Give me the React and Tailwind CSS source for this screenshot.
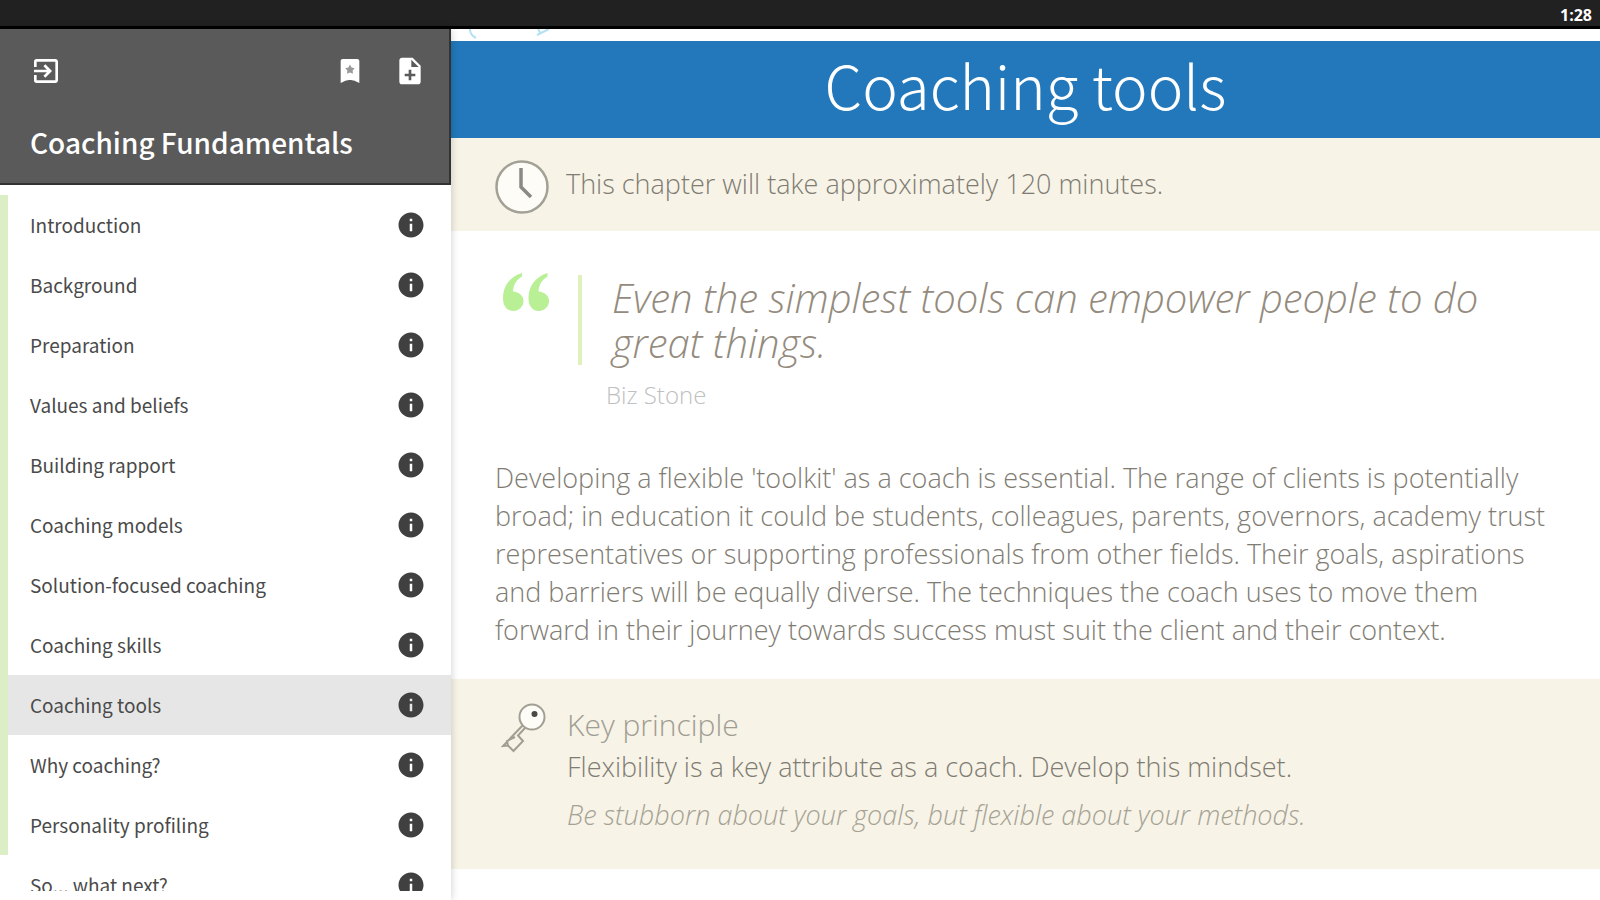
import { MdExitToApp, MdInfo, MdNoteAdd } from 'react-icons/md';

const chapters = [
  'Introduction',
  'Background',
  'Preparation',
  'Values and beliefs',
  'Building rapport',
  'Coaching models',
  'Solution-focused coaching',
  'Coaching skills',
  'Coaching tools',
  'Why coaching?',
  'Personality profiling',
  'So... what next?',
];

const current = 'Coaching tools';

const BookmarkIcon = () => (
  <svg viewBox="0 0 24 24" className="h-8 w-8" aria-hidden="true">
    <path d="M6.500 3h11C18.300 3 19 3.700 19 4.500V21l-4-1.800c-1.500-.7-4.500-.7-6 0L5 21V4.500C5 3.700 5.700 3 6.500 3z" fill="#fff" />
    <path d="M12 7.200l1.200 2.100 2.300.6-1.500 1.800.2 2.400-2.200-.9-2.200.9.2-2.400-1.500-1.800 2.300-.6z" fill="#999" />
  </svg>
);

const ClockIcon = () => (
  <svg viewBox="0 0 54 54" className="h-[54px] w-[54px] shrink-0" fill="none" aria-hidden="true">
    <circle cx="27" cy="27" r="25.500" fill="#fdfcf6" stroke="#a3a196" strokeWidth="2.500" />
    <path d="M26 8v19l10 10" stroke="#8b8a82" strokeWidth="3.500" />
  </svg>
);

const QuoteIcon = () => (
  <svg viewBox="0 0 46 38" className="h-[38px] w-[46px] shrink-0" fill="#b9ef95" aria-hidden="true">
    <path d="M19 0v3.500C14 6.500 10.500 11 10 18.500c6 .5 10.500 4 10.500 9.500 0 5.500-4.500 10-10.300 10C3.500 38 0 32.500 0 25 0 12.500 7.500 3.500 19 0z" />
    <path d="M44.500 0v3.500c-5 3-8.500 7.500-9 15 6 .5 10.500 4 10.500 9.500 0 5.500-4.500 10-10.300 10-6.700 0-10.200-5.500-10.200-13 0-12.500 7.500-21.500 19-25z" />
  </svg>
);

const KeyIcon = () => (
  <svg viewBox="0 0 46 50" className="h-[50px] w-[46px]" fill="none" stroke="#a19f93" strokeWidth="2" aria-hidden="true">
    <circle cx="31" cy="14" r="12.500" fill="#fdfcf6" />
    <path d="M21.500 22.500L2 43l5-.5 5.500 5.500L22 38l-5-5.500 7-7.500M7 42.500L6 38l8-4" />
    <circle cx="33.500" cy="11" r="3" fill="#4a4a44" stroke="none" />
  </svg>
);

export default function App() {
  return (
    <div className="flex h-screen flex-col overflow-hidden bg-white font-['Noto_Sans_CJK_JP',sans-serif]">
      <div className="flex h-[29px] shrink-0 items-center justify-end border-b-3 border-black bg-[#212121] px-2 pt-1 font-['Open_Sans',sans-serif] text-base font-bold text-white">
        1:28
      </div>

      <div className="flex min-h-0 flex-1">
        <aside className="z-10 flex w-[451px] shrink-0 flex-col bg-white pb-[9px] shadow-[0_0_8px_rgba(0,0,0,0.2)]">
          <header className="h-[156px] shrink-0 border-r-2 border-b-2 border-[#333] bg-[#5a5a5a] pt-[26px] pr-[23px] pl-[30px] text-white">
            <div className="flex items-center">
              <button type="button" aria-label="Close book">
                <MdExitToApp className="h-8 w-8" />
              </button>
              <button type="button" aria-label="Bookmarks" className="ml-auto">
                <BookmarkIcon />
              </button>
              <button type="button" aria-label="Add note" className="ml-7">
                <MdNoteAdd className="h-8 w-8" />
              </button>
            </div>
            <h1 className="mt-[37px] text-[28px] leading-9 font-medium">Coaching Fundamentals</h1>
          </header>

          <nav className="min-h-0 flex-1 overflow-hidden pt-[10px]">
            <ul>
              {chapters.map((chapter, idx) => (
                <li
                  key={chapter}
                  className={`flex h-[60px] items-center border-l-8 pr-[25px] pl-[22px] ${
                    idx < chapters.length - 1 ? 'border-[#dbeec6]' : 'border-white'
                  } ${chapter === current ? 'bg-[#e6e6e6]' : ''}`}
                >
                  <a href="#" className="flex-1 text-[19px] leading-6 text-[#4a4a4a]">
                    {chapter}
                  </a>
                  <button type="button" aria-label={`About ${chapter}`}>
                    <MdInfo className="h-[30px] w-[30px] text-[#404040]" />
                  </button>
                </li>
              ))}
            </ul>
          </nav>
        </aside>

        <main className="min-w-0 flex-1 overflow-hidden font-['Open_Sans',sans-serif] font-light text-[#7f7c73]">
          <div className="h-3 px-4">
            <svg viewBox="0 0 84 10" className="h-[10px] w-[84px]" fill="none" stroke="#b5e0f3" strokeWidth="2" aria-hidden="true">
              <path d="M3 0c0 4 2 7 6 9M71 0l3 5M82 0l-12 6" />
            </svg>
          </div>
          <h2 className="bg-[#2278bb] pb-3 text-center font-['Noto_Sans_CJK_JP',sans-serif] text-[60px] leading-[85px] font-light text-white">
            Coaching tools
          </h2>

          <section className="flex h-[93px] items-center gap-[17px] bg-[#f7f3e7] pt-1 pl-11 text-[27px]">
            <ClockIcon />
            <p className="pb-1">This chapter will take approximately 120 minutes.</p>
          </section>

          <figure className="flex items-start pt-[42px] pr-20 pl-[52px]">
            <QuoteIcon />
            <div className="mt-[2px] ml-[29px]">
              <blockquote className="border-l-4 border-[#dff2bd] pl-[30px] text-[40px] leading-[45px] text-[#948b7e] italic">
                Even the simplest tools can empower people to do great things.
              </blockquote>
              <figcaption className="mt-3 ml-7 text-2xl leading-9 text-[#c0c0c0]">Biz Stone</figcaption>
            </div>
          </figure>

          <p className="mt-[46px] pr-10 pl-11 text-[27px] leading-[38px]">
            Developing a flexible 'toolkit' as a coach is essential. The range of clients is potentially broad; in
            education it could be students, colleagues, parents, governors, academy trust representatives or supporting
            professionals from other fields. Their goals, aspirations and barriers will be equally diverse. The
            techniques the coach uses to move them forward in their journey towards success must suit the client and
            their context.
          </p>

          <section className="mt-[30px] flex h-[190px] items-start gap-5 bg-[#f7f3e7] pt-6 pl-[50px] text-[27px]">
            <KeyIcon />
            <div>
              <h3 className="text-[30px] leading-[44px] text-[#a09d93]">Key principle</h3>
              <p className="leading-10">Flexibility is a key attribute as a coach. Develop this mindset.</p>
              <p className="mt-2 leading-10 text-[#a5a294] italic">
                Be stubborn about your goals, but flexible about your methods.
              </p>
            </div>
          </section>
        </main>
      </div>
    </div>
  );
}
